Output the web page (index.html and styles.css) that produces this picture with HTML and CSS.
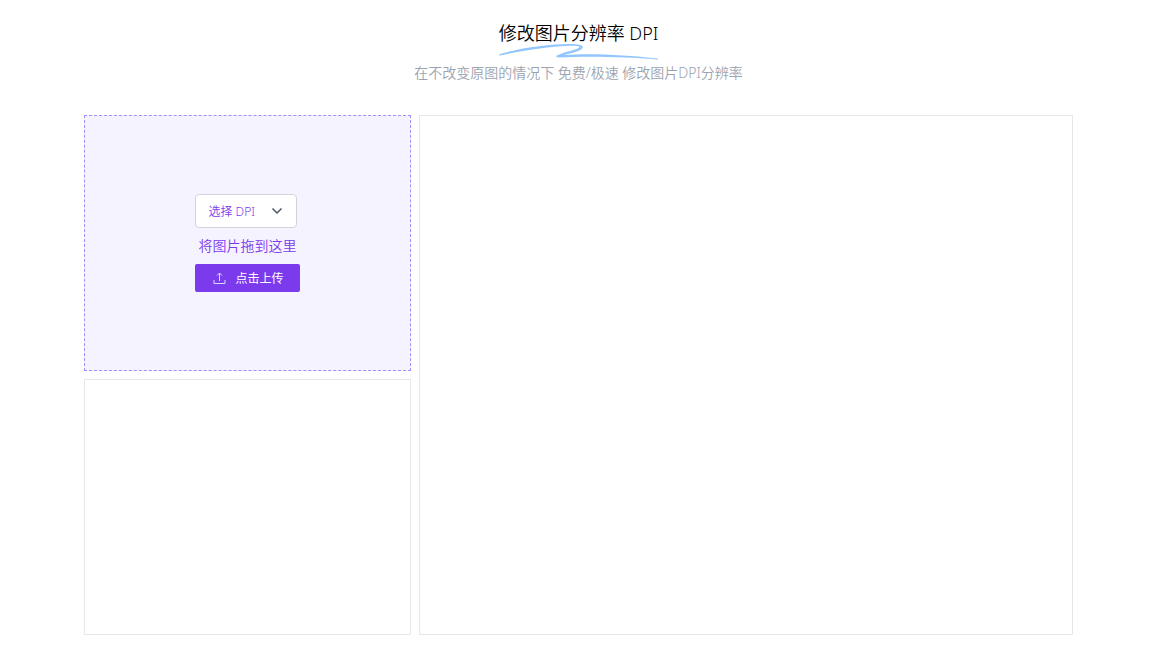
FILE: index.html
```
<!DOCTYPE html>
<html lang="zh-CN">
<head>
    <meta charset="UTF-8">
    <meta name="viewport" content="width=device-width, initial-scale=1.0">
    <title>修改图片分辨率 DPI</title>
    <link rel="stylesheet" href="styles.css">
</head>
<body>
    <header class="header">
        <h1 class="title">
            修改图片分辨率 DPI
            <svg class="underline" viewBox="0 0 162 18" preserveAspectRatio="none" aria-hidden="true">
                <path d="M1 11C22 5 50 1 72 1C80 1 85 2 85 4C85 8 73 10 66 12C92 10 130 12 161 15.500C162 16 161 17 160 16.500C130 14 92 13 61 14.500C58 14.500 57 13 60 12C68 8 80 7 82 4C80 2 70 2.700 62 3.300C42 5 22 8 1 12.500C0 12.500 0 11.500 1 11Z" />
            </svg>
        </h1>
        <p class="subtitle">在不改变原图的情况下 免费/极速 修改图片DPI分辨率</p>
    </header>

    <main class="container">
        <section class="upload">
            <div class="controls">
                <div class="select-box">
                    <select class="select" id="dpi" aria-label="选择 DPI">
                        <option value="" selected>选择 DPI</option>
                        <option value="72">72</option>
                        <option value="96">96</option>
                        <option value="150">150</option>
                        <option value="300">300</option>
                    </select>
                    <svg class="arrow" viewBox="0 0 12 12" aria-hidden="true">
                        <path d="M1.500 3.500L6 8L10.500 3.500" />
                    </svg>
                </div>
                <p class="tip">将图片拖到这里</p>
                <button type="button" class="btn">
                    <svg class="icon" viewBox="0 0 16 14" aria-hidden="true">
                        <path d="M8.500 10V2M6 4.500L8.500 2L11 4.500M3 9V12.500H14V9" />
                    </svg>
                    点击上传
                </button>
            </div>
        </section>
        <section class="panel preview"></section>
        <section class="panel"></section>
    </main>
</body>
</html>
```

FILE: styles.css
```
* {
    box-sizing: border-box;
}
body {
    margin: 0;
    padding: 19px 88px 23px 84px;
    background-color: #fff;
    font-family: "Noto Sans", "Noto Sans CJK SC", sans-serif;
    font-size: 14px;
    font-weight: 350;
    line-height: 20px;
}
.header {
    display: flex;
    flex-direction: column;
    align-items: center;
    gap: 16px;
    margin-bottom: 32px;
    text-align: center;
}
.title {
    position: relative;
    margin: 0;
    font-size: 18px;
    font-weight: 350;
    line-height: 28px;
    color: #000;
}
.underline {
    position: absolute;
    left: 0;
    top: 24px;
    width: 100%;
    height: 18px;
    fill: #93c5fd;
}
.subtitle {
    margin: 0;
    color: #9ca3af;
}
.container {
    display: grid;
    grid-template-columns: 1fr 2fr;
    grid-auto-rows: minmax(256px, auto);
    gap: 8px;
}
.upload {
    display: flex;
    align-items: center;
    justify-content: center;
    border: 1px dashed #a78bfa;
    background-color: #f5f3ff;
    color: #7c3aed;
}
.controls {
    display: flex;
    flex-direction: column;
    align-items: flex-start;
    gap: 8px;
}
.panel {
    border: 1px solid #e5e7eb;
}
.preview {
    grid-row: span 2;
}
.select-box {
    position: relative;
}
.select {
    display: block;
    width: 102px;
    height: 34px;
    padding: 0 12px;
    border: 1px solid #d1d5db;
    border-radius: 4px;
    background-color: #fff;
    color: #7c3aed;
    font-family: inherit;
    font-size: 12px;
    font-weight: 350;
    appearance: none;
    cursor: pointer;
}
.arrow {
    position: absolute;
    top: 11px;
    right: 14px;
    width: 12px;
    height: 12px;
    fill: none;
    stroke: #4b5563;
    stroke-width: 1.5;
    pointer-events: none;
}
.tip {
    align-self: center;
    margin: 0;
}
.btn {
    display: flex;
    align-items: center;
    gap: 8px;
    height: 28px;
    padding: 0 16px;
    border: none;
    border-radius: 2px;
    background-color: #7c3aed;
    color: #fff;
    font-family: inherit;
    font-size: 12px;
    cursor: pointer;
}
.btn:hover {
    background-color: #6d28d9;
}
.icon {
    width: 16px;
    height: 14px;
    fill: none;
    stroke: #ddd6fe;
    stroke-width: 1;
}
```
